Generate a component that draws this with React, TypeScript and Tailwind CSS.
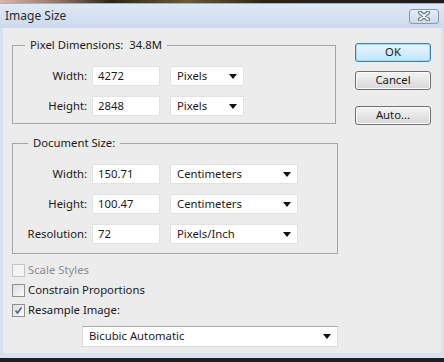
import React from "react";

const font = { fontFamily: '"Noto Sans", "Liberation Sans", sans-serif' };

function Arrow() {
  return (
    <svg width="8" height="5" viewBox="0 0 8 5" className="shrink-0">
      <path d="M0 0 H8 L4 5 Z" fill="#111" />
    </svg>
  );
}

function Select({ value, w }: { value: string; w: string }) {
  return (
    <div className={`${w} h-[20px] bg-white border border-[#e2e2e2] flex items-center justify-between pl-[6px] pr-[6px] text-[11.3px] text-[#1a1a1a]`}>
      <span>{value}</span>
      <Arrow />
    </div>
  );
}

function Row({ label, value, unit, selW }: { label: string; value: string; unit: string; selW: string }) {
  return (
    <div className="flex items-center h-[20px]">
      <div className="w-[74px] text-right text-[11.3px] text-[#1a1a1a]">{label}</div>
      <div className="ml-[5px] w-[68px] h-[20px] bg-white border border-[#e2e2e2] flex items-center pl-[5px] text-[11.3px] text-[#1a1a1a]">
        {value}
      </div>
      <div className="ml-[10px]">
        <Select value={unit} w={selW} />
      </div>
    </div>
  );
}

function Check({ label, checked, disabled }: { label: string; checked?: boolean; disabled?: boolean }) {
  return (
    <div className="flex items-center h-[20px]">
      <div
        className={`w-[13px] h-[13px] border ${disabled ? "border-[#c4c4c4] bg-[#f4f4f4]" : "border-[#8e8f8f] bg-gradient-to-br from-[#dcdcdc] to-[#fbfbfb]"} flex items-center justify-center`}
      >
        {checked && (
          <svg width="11" height="11" viewBox="0 0 11 11">
            <path d="M2.5 5.5 L4.5 8 L8.5 2.5" stroke="#4a5d86" strokeWidth="1.5" fill="none" />
          </svg>
        )}
      </div>
      <span className={`ml-[3px] text-[11.3px] ${disabled ? "text-[#8d8d8d]" : "text-[#1a1a1a]"}`}>{label}</span>
    </div>
  );
}

function Btn({ label, primary }: { label: string; primary?: boolean }) {
  return (
    <div
      className={`w-[76px] h-[19px] rounded-[3px] border flex items-center justify-center text-[11.3px] text-[#1a1a1a] ${
        primary
          ? "border-[#3c7fb1] bg-gradient-to-b from-[#eaf6fd] to-[#bee6fd] shadow-[inset_0_0_0_1px_#a7d9f5]"
          : "border-[#707070] bg-gradient-to-b from-[#f4f4f4] to-[#d8d8d8] shadow-[inset_0_0_0_1px_#fbfbfb]"
      }`}
    >
      {label}
    </div>
  );
}

export default function App() {
  return (
    <div className="w-[444px] h-[362px] overflow-hidden bg-[#1e1e1e] flex flex-col" style={font}>
      <div className="h-[3px] bg-[linear-gradient(to_right,#d9b4ab_0%,#9a7a70_12%,#2c261c_25%,#6b5a3a_42%,#2a2418_60%,#1c1c1c_100%)]" />
      <div className="h-[25px] bg-gradient-to-b from-[#dfe9f5] to-[#cbdaeb] flex items-center justify-between border-t border-[#9fb2c8]">
        <span className="pl-[5px] text-[12px] text-[#2a2a2a]">Image Size</span>
        <div className="mr-[5px] w-[30px] h-[15px] rounded-[3px] border border-[#8a9ab0] bg-gradient-to-b from-[#e4ecf5] to-[#cfdbe9] flex items-center justify-center">
          <svg width="12" height="10" viewBox="0 0 12 10">
            <path d="M2 1.5 L10 8.5 M10 1.5 L2 8.5" stroke="#55606e" strokeWidth="4" strokeLinecap="round" />
            <path d="M2 1.5 L10 8.5 M10 1.5 L2 8.5" stroke="#ffffff" strokeWidth="2" strokeLinecap="round" />
          </svg>
        </div>
      </div>
      <div className="h-[330px] border-x-[3px] border-b-[5px] border-[#d6e2ef] bg-[#ececec] flex">
        <div className="w-[335px] pl-[9px] flex flex-col">
          <fieldset className="mt-[9px] w-[324px] border border-[#a5a5a5] pt-[13px] pb-[7px] flex flex-col gap-[10px]">
            <legend className="ml-[12px] px-[5px] text-[11.3px] leading-[16px] text-[#1a1a1a]">
              Pixel Dimensions:&nbsp;&nbsp;34.8M
            </legend>
            <Row label="Width:" value="4272" unit="Pixels" selW="w-[74px]" />
            <Row label="Height:" value="2848" unit="Pixels" selW="w-[74px]" />
          </fieldset>
          <fieldset className="mt-[11px] w-[326px] border border-[#a5a5a5] pt-[13px] pb-[9px] flex flex-col gap-[10px]">
            <legend className="ml-[15px] px-[5px] text-[11.3px] leading-[16px] text-[#1a1a1a]">Document Size:</legend>
            <Row label="Width:" value="150.71" unit="Centimeters" selW="w-[128px]" />
            <Row label="Height:" value="100.47" unit="Centimeters" selW="w-[128px]" />
            <Row label="Resolution:" value="72" unit="Pixels/Inch" selW="w-[128px]" />
          </fieldset>
          <div className="mt-[6px] flex flex-col">
            <Check label="Scale Styles" disabled />
            <Check label="Constrain Proportions" />
            <Check label="Resample Image:" checked />
          </div>
          <div className="mt-[6px] ml-[70px] w-[256px] h-[21px] bg-white border border-[#dcdcdc] border-t-[#a9a9a9] flex items-center justify-between pl-[6px] pr-[6px] text-[11.3px] text-[#1a1a1a]">
            <span>Bicubic Automatic</span>
            <Arrow />
          </div>
        </div>
        <div className="ml-[17px] mt-[15px] flex flex-col">
          <Btn label="OK" primary />
          <div className="mt-[9px]">
            <Btn label="Cancel" />
          </div>
          <div className="mt-[16px]">
            <Btn label="Auto..." />
          </div>
        </div>
      </div>
    </div>
  );
}
